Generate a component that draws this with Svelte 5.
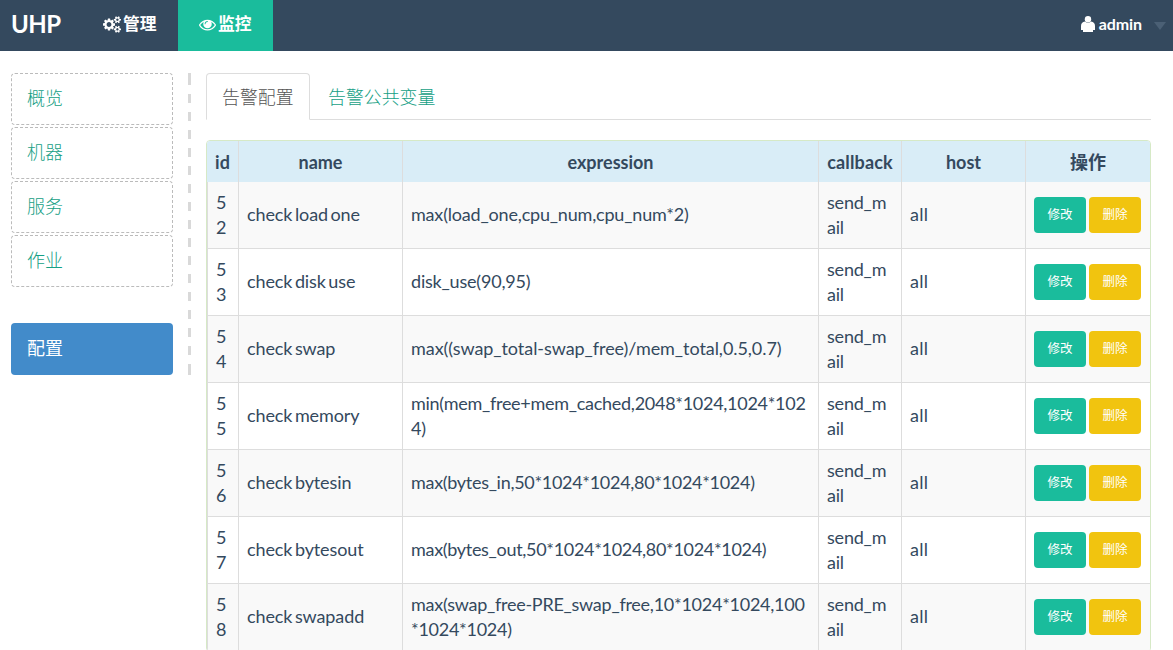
<script>
  const rows = [
    { id: 52, name: 'check load one', expression: 'max(load_one,cpu_num,cpu_num*2)', tracking: -0.19, single: true },
    { id: 53, name: 'check disk use', expression: 'disk_use(90,95)', tracking: -0.2, single: true },
    { id: 54, name: 'check swap', expression: 'max((swap_total-swap_free)/mem_total,0.5,0.7)', tracking: -0.06, single: true },
    { id: 55, name: 'check memory', expression: 'min(mem_free+mem_cached,2048*1024,1024*1024)', tracking: -0.28, single: false },
    { id: 56, name: 'check bytesin', expression: 'max(bytes_in,50*1024*1024,80*1024*1024)', tracking: -0.3, single: true },
    { id: 57, name: 'check bytesout', expression: 'max(bytes_out,50*1024*1024,80*1024*1024)', tracking: -0.31, single: true },
    { id: 58, name: 'check swapadd', expression: 'max(swap_free-PRE_swap_free,10*1024*1024,100*1024*1024)', tracking: -0.26, single: false },
  ];
  const links = ['概览', '机器', '服务', '作业'];
</script>

<div class="page">
  <nav class="navbar">
    <a class="brand" href="#top">UHP</a>
    <a class="item" href="#manage">
      <svg class="cogs" width="18" height="17" viewBox="0 0 1920 1792" fill="#fff"><path d="M896 896q0-106-75-181t-181-75-181 75-75 181 75 181 181 75 181-75 75-181zm768 512q0-52-38-90t-90-38-90 38-38 90q0 53 37.500 90.500t90.500 37.500 90.500-37.500 37.500-90.500zm0-1024q0-52-38-90t-90-38-90 38-38 90q0 53 37.500 90.500t90.500 37.500 90.500-37.500 37.500-90.500zm-384 421v185q0 10-7 19.500t-16 10.500l-155 24q-11 35-32 76 34 48 90 115 7 11 7 20 0 12-7 19-23 30-82.500 89.500t-78.500 59.500q-11 0-21-7l-115-90q-37 19-77 31-11 108-23 155-7 24-30 24h-186q-11 0-20-7.500t-10-17.500l-23-153q-34-10-75-31l-118 89q-7 7-20 7-11 0-21-8-144-133-144-160 0-9 7-19 10-14 41-53t47-61q-23-44-35-82l-152-24q-10-1-17-9.500t-7-19.500v-185q0-10 7-19.500t16-10.500l155-24q11-35 32-76-34-48-90-115-7-11-7-20 0-12 7-20 22-30 82-89t79-59q11 0 21 7l115 90q34-18 77-32 11-108 23-154 7-24 30-24h186q11 0 20 7.500t10 17.500l23 153q34 10 75 31l118-89q8-7 20-7 11 0 21 8 144 133 144 160 0 8-7 19-12 16-42 54t-45 60q23 48 34 82l152 23q10 2 17 10.500t7 19.500zm640 533v140q0 16-149 31-12 27-30 52 51 113 51 138 0 4-4 7-122 71-124 71-8 0-46-47t-52-68q-20 2-30 2t-30-2q-14 21-52 68t-46 47q-2 0-124-71-4-3-4-7 0-25 51-138-18-25-30-52-149-15-149-31v-140q0-16 149-31 13-29 30-52-51-113-51-138 0-4 4-7 4-2 35-20t59-34 30-16q8 0 46 46.500t52 67.500q20-2 30-2t30 2q51-71 92-112l6-2q4 0 124 70 4 3 4 7 0 25-51 138 17 23 30 52 149 15 149 31zm0-1024v140q0 16-149 31-12 27-30 52 51 113 51 138 0 4-4 7-122 71-124 71-8 0-46-47t-52-68q-20 2-30 2t-30-2q-14 21-52 68t-46 47q-2 0-124-71-4-3-4-7 0-25 51-138-18-25-30-52-149-15-149-31v-140q0-16 149-31 13-29 30-52-51-113-51-138 0-4 4-7 4-2 35-20t59-34 30-16q8 0 46 46.500t52 67.500q20-2 30-2t30 2q51-71 92-112l6-2q4 0 124 70 4 3 4 7 0 25-51 138 17 23 30 52 149 15 149 31z"/></svg><span>管理</span>
    </a>
    <a class="item active" href="#monitor">
      <svg width="17" height="17" viewBox="0 0 1792 1792" fill="#fff"><path d="M1664 960q-152-236-381-353 61 104 61 225 0 185-131.500 316.500t-316.500 131.500-316.500-131.500-131.500-316.500q0-121 61-225-229 117-381 353 133 205 333.500 326.500t434.500 121.500 434.500-121.500 333.500-326.500zm-720-384q0-20-14-34t-34-14q-125 0-214.500 89.500t-89.500 214.500q0 20 14 34t34 14 34-14 14-34q0-86 61-147t147-61q20 0 34-14t14-34zm848 384q0 34-20 69-140 230-376.500 368.500t-499.500 138.500-499.500-139-376.500-368q-20-35-20-69t20-69q140-229 376.500-368t499.500-139 499.500 139 376.500 368q20 35 20 69z"/></svg><span>监控</span>
    </a>
    <a class="user" href="#account">
      <svg width="14" height="16" viewBox="0 0 14 16" fill="#fff"><circle cx="7" cy="3.200" r="3.200"/><path d="M4 5.500Q7 8 10 5.500Q14 6 14 10V14H12V16H2V14H0V10Q0 6 4 5.500Z"/></svg>
      <span>admin</span><i class="caret"></i>
    </a>
  </nav>

  <div class="content">
    <aside>
      {#each links as link}<a class="side" href="#{link}">{link}</a>{/each}
      <a class="side current" href="#config">配置</a>
    </aside>
    <div class="divider"></div>
    <main>
      <div class="tabs">
        <a class="tab selected" href="#alarms">告警配置</a>
        <a class="tab" href="#variables">告警公共变量</a>
      </div>
      <div class="panel">
        <table>
          <colgroup><col class="c1" /><col class="c2" /><col class="c3" /><col class="c4" /><col class="c5" /><col class="c6" /></colgroup>
          <thead>
            <tr><th>id</th><th>name</th><th>expression</th><th class="callback">callback</th><th>host</th><th>操作</th></tr>
          </thead>
          <tbody>
            {#each rows as row}
              <tr>
                <td>{row.id}</td>
                <td class="name single">{row.name}</td>
                <td class:single={row.single} style:letter-spacing="{row.tracking}px">{row.expression}</td>
                <td class="mail">send_mail</td>
                <td class="single host">all</td>
                <td><div class="actions"><button>修改</button><button class="delete">删除</button></div></td>
              </tr>
            {/each}
          </tbody>
        </table>
      </div>
    </main>
  </div>
</div>

<style>
  :global(body) { margin: 0; background: #fff; }
  .page { height: 650px; overflow: hidden; font: 18px/25px Lato, "Noto Sans CJK SC", sans-serif; color: #34495e; }
  .page * { box-sizing: border-box; }
  a { text-decoration: none; color: #16a085; }
  .navbar { height: 51px; background: #34495e; display: flex; }
  .navbar a { color: #fff; display: flex; align-items: center; font-weight: 700; }
  .navbar .brand { width: 82px; padding: 0 0 5px 11px; font-size: 24px; letter-spacing: -0.5px; }
  .navbar .item { width: 96px; padding: 0 0 3px 21px; font-size: 16.800px; white-space: nowrap; gap: 2px; }
  .item span { padding-bottom: 1px; }
  .user span { padding-bottom: 2px; }
  .navbar .active { width: 95px; background: #1abc9c; gap: 2px; }
  .navbar .user { margin-left: auto; padding: 0 7px 3px 0; font-size: 16px; gap: 4px; letter-spacing: -0.1px; }
  .caret { border: 6px solid transparent; border-top: 8px solid #4b6075; border-bottom: 0; margin: 4px 0 0 8px; }
  .content { display: flex; padding: 22px 22px 0 11px; }
  aside { width: 162px; display: flex; flex-direction: column; gap: 2px; }
  .side { height: 52px; padding: 12px 15px; border: 1px dashed #bbb; border-radius: 4px; font-weight: 300; }
  .current { margin-top: 34px; color: #fff; background: #428bca; border-color: #428bca; font-weight: 400; }
  .divider { width: 3px; height: 302px; margin: 0 15px; background: linear-gradient(#d9d9d9, #d9d9d9) 0 0 / 3px 3px no-repeat, linear-gradient(#d9d9d9, #d9d9d9) 0 100% / 3px 11px no-repeat, repeating-linear-gradient(#d9d9d9 0 9px, transparent 9px 18px) 0 3px; }
  main { flex: 1; min-width: 0; }
  .tabs { height: 47px; border-bottom: 1px solid #ddd; display: flex; gap: 2px; }
  .tab { height: 47px; padding: 11px 15px; border: 1px solid transparent; font-size: 17.900px; font-weight: 300; }
  .selected { width: 104px; color: #555; background: #fff; border-color: #ddd #ddd #fff; border-radius: 4px 4px 0 0; }
  .panel { margin-top: 20px; border: 1px solid #d6e9c6; border-radius: 4px; overflow: hidden; }
  table { width: 100%; table-layout: fixed; border-collapse: separate; border-spacing: 0; }
  .c1 { width: 32px; }
  .c2 { width: 164px; }
  .c3 { width: 416px; }
  .c4 { width: 83px; }
  .c5 { width: 124px; }
  th { height: 41px; padding: 9px 0 7px; background: #d9edf7; border-right: 1px solid #ddd; font-weight: 700; }
  .callback { letter-spacing: 0.12px; }
  td { height: 67px; padding: 8px; border-right: 1px solid #ddd; border-bottom: 1px solid #ddd; word-break: break-all; vertical-align: middle; }
  td:first-child { border-left: 1px solid #ddd; }
  .name { letter-spacing: -0.1px; word-spacing: -2px; }
  .mail { letter-spacing: -0.2px; }
  .host { letter-spacing: 0.3px; }
  .single { padding-bottom: 9px; }
  th:last-child, td:last-child { border-right: 0; }
  tbody tr:nth-child(odd) { background: #f9f9f9; }
  .actions { display: flex; gap: 3px; }
  button { width: 52px; height: 36px; padding: 0; border: 0; border-radius: 4px; background: #1abc9c; color: #fff; font: 400 12.500px/18px Lato, "Noto Sans CJK SC", sans-serif; }
  .delete { background: #f1c40f; }
</style>
